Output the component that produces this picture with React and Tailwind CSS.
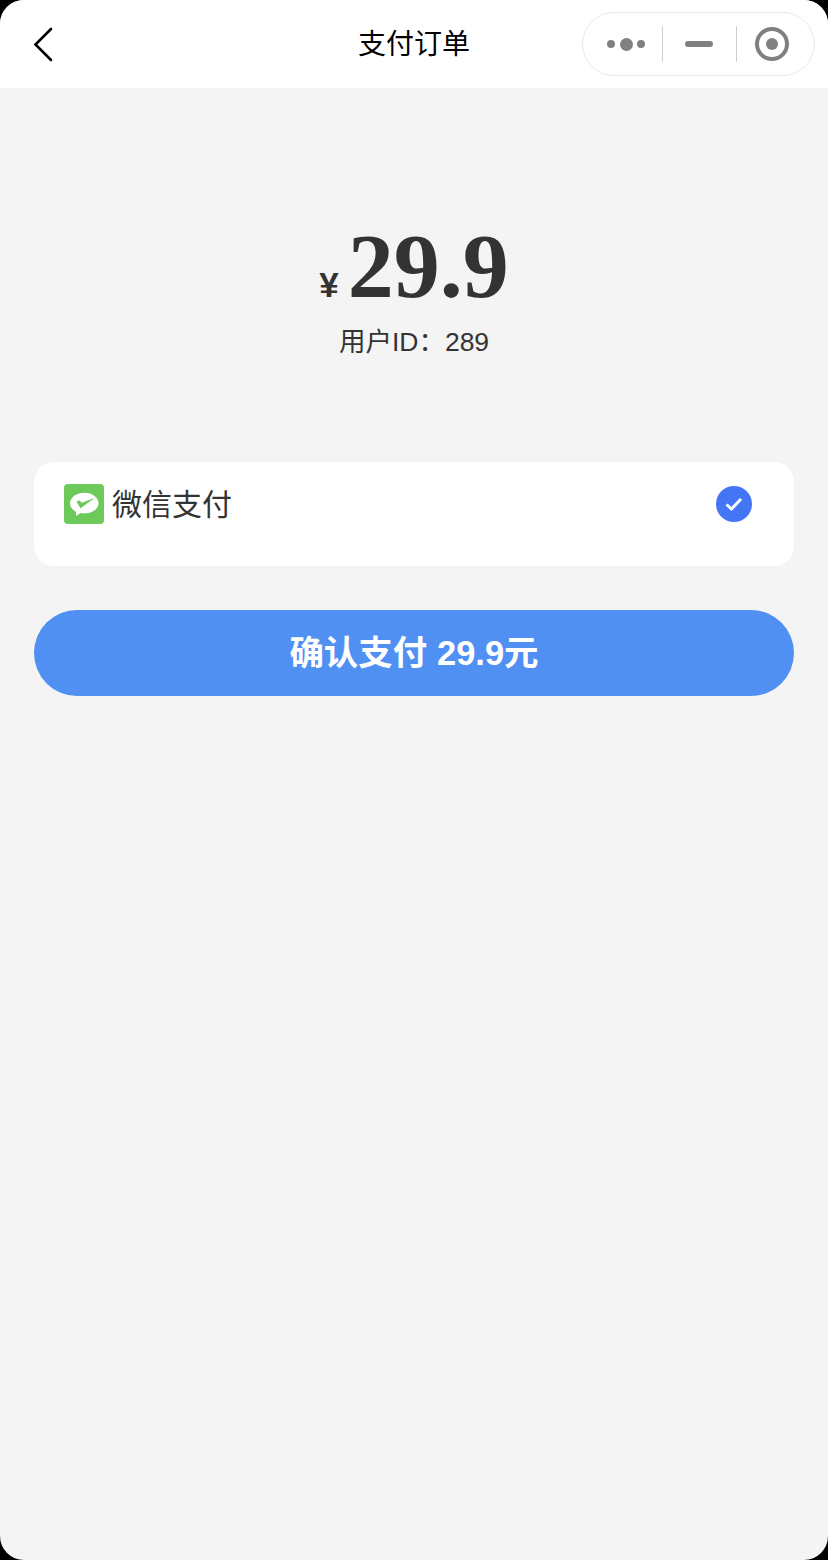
import React from 'react';

const sans = 'font-["Liberation_Sans","Noto_Sans_CJK_SC",sans-serif]';

const NavBar = () => (
    <div className="h-[88px] bg-white flex items-center justify-between pl-[30px] pr-[13px] relative shrink-0">
        <svg width="26" height="36" viewBox="0 0 26 36" fill="none" className="mt-px">
            <path d="M21 2 L5.500 17.500 L21 33" stroke="#000" strokeWidth="2.600" strokeLinecap="round" />
        </svg>
        <div className="absolute left-0 right-0 pt-[2px] text-center text-[28px] leading-[40px] text-black pointer-events-none">支付订单</div>
        <div className="w-[233px] h-[64px] rounded-full border border-[#e8e8e8] flex items-center">
            <div className="w-[79px] flex items-center justify-center gap-[4.500px] pl-[7px]">
                <span className="w-2 h-2 rounded-full bg-[#808080]"></span>
                <span className="w-[13px] h-[13px] rounded-full bg-[#808080]"></span>
                <span className="w-2 h-2 rounded-full bg-[#808080]"></span>
            </div>
            <div className="w-px h-9 bg-[#cfcfcf]"></div>
            <div className="w-[73px] flex items-center justify-center pr-[2px]">
                <span className="w-7 h-[6px] rounded-full bg-[#808080]"></span>
            </div>
            <div className="w-px h-9 bg-[#cfcfcf]"></div>
            <div className="flex-1 flex items-center justify-center pr-[8px]">
                <span className="w-[34px] h-[34px] rounded-full border-[4px] border-[#808080] flex items-center justify-center">
                    <span className="w-3 h-3 rounded-full bg-[#808080]"></span>
                </span>
            </div>
        </div>
    </div>
);

const WechatIcon = () => (
    <svg width="40" height="40" viewBox="0 0 40 40" className="shrink-0">
        <rect width="40" height="40" rx="4" fill="#6cc95a" />
        <path d="M20.500 8.700C12.500 8.700 6 13.500 6 19.200c0 3.500 2.300 6.600 5.900 8.500L12 32l4.600-3c1.200.2 2.600.4 3.900.4 8 0 14-4.700 14-10.200S28.500 8.700 20.500 8.700z" fill="#fff" />
        <path d="M12.500 17.800L15.500 16.300 17.800 18.800 31 13.800 16.500 24.200z" fill="#6cc95a" />
    </svg>
);

const App = () => {
    return (
        <div className={`w-[828px] h-[1560px] bg-black ${sans}`}>
            <div className="w-full h-full bg-[#f4f4f4] rounded-[24px] overflow-hidden flex flex-col">
                <NavBar />
                <div className="flex flex-col items-center text-[#333333] pt-[129px]">
                    <div className="flex items-baseline h-[98px] leading-[98px]">
                        <span className="text-[35px] font-bold mr-[9px]">¥</span>
                        <span className="text-[92px] font-bold font-['Liberation_Serif',serif]">29.9</span>
                    </div>
                    <div className="mt-[9px] text-[26.500px] leading-[36px]">用户ID：289</div>
                </div>
                <div className="mt-[102px] mx-[34px] h-[104px] bg-white rounded-[20px] flex items-start justify-between pt-[22px] pl-[30px] pr-[42px]">
                    <div className="flex items-start gap-2">
                        <WechatIcon />
                        <span className="text-[30px] leading-[40px] text-[#333333] mt-px">微信支付</span>
                    </div>
                    <div className="w-9 h-9 mt-[2px] rounded-full bg-[#4475f5] flex items-center justify-center">
                        <svg width="20" height="16" viewBox="0 0 20 16" fill="none">
                            <path d="M2.500 8.500 L7.500 13 L17 3" stroke="#fff" strokeWidth="3" />
                        </svg>
                    </div>
                </div>
                <div className="mt-[44px] mx-[34px] h-[86px] pt-[2px] rounded-[43px] bg-[#4f90f2] flex items-center justify-center text-white text-[34.500px] font-bold">
                    确认支付 29.9元
                </div>
            </div>
        </div>
    );
};

export default App;
